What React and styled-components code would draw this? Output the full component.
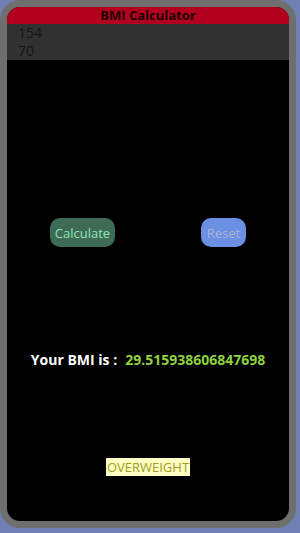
import React from "react";
import styled, { createGlobalStyle } from "styled-components";

const Global = createGlobalStyle`
  html, body { margin: 0; padding: 0; background: #7080b4; }
  body { font-family: "Open Sans", "Noto Sans", sans-serif; }
`;

const Frame = styled.div`
  box-sizing: border-box;
  width: 296px;
  height: 528px;
  border: 7px solid #6e6e6e;
  border-radius: 20px;
  background: #6e6e6e;
`;

const Screen = styled.div`
  height: 100%;
  background: #000;
  border-radius: 13px;
  overflow: hidden;
  display: flex;
  flex-direction: column;
`;

const Header = styled.div`
  height: 17px;
  background: #b3001f;
  color: #1a0005;
  font-weight: 700;
  font-size: 13px;
  line-height: 17px;
  text-align: center;
`;

const Field = styled.input`
  box-sizing: border-box;
  height: 18px;
  width: 100%;
  border: none;
  background: #313131;
  color: #141414;
  font-family: "Open Sans", "Noto Sans", sans-serif;
  font-size: 14px;
  line-height: 18px;
  padding: 0 0 0 11px;
  outline: none;
  display: block;
`;

const Buttons = styled.div`
  display: flex;
  justify-content: space-around;
  margin-top: 158px;
`;

const Button = styled.button`
  height: 29px;
  padding: 0 ${(p) => p.$pad}px;
  border: none;
  border-radius: 10px;
  background: ${(p) => p.$bg};
  color: ${(p) => p.$fg};
  font-family: "Open Sans", "Noto Sans", sans-serif;
  font-size: 13px;
`;

const Result = styled.div`
  margin-top: 104px;
  text-align: center;
  font-weight: 700;
  font-size: 14px;
  line-height: 18px;
  color: #fff;
`;

const Value = styled.span`
  color: #8fd13f;
  margin-left: 8px;
`;

const StatusRow = styled.div`
  margin-top: 86px;
  text-align: center;
`;

const Status = styled.span`
  background: #ffffc4;
  color: #a09d1c;
  font-size: 13px;
  line-height: 15px;
  padding: 0 1px;
`;

export default function App() {
  return (
    <>
      <Global />
      <Frame>
        <Screen>
          <Header>BMI Calculator</Header>
          <Field defaultValue="154" />
          <Field defaultValue="70" />
          <Buttons>
            <Button $bg="#3e6b56" $fg="#8fe5b4" $pad={5}>Calculate</Button>
            <Button $bg="#6a8fe3" $fg="#a9b6d4" $pad={6}>Reset</Button>
          </Buttons>
          <Result>
            Your BMI is :<Value>29.515938606847698</Value>
          </Result>
          <StatusRow>
            <Status>OVERWEIGHT</Status>
          </StatusRow>
        </Screen>
      </Frame>
    </>
  );
}
